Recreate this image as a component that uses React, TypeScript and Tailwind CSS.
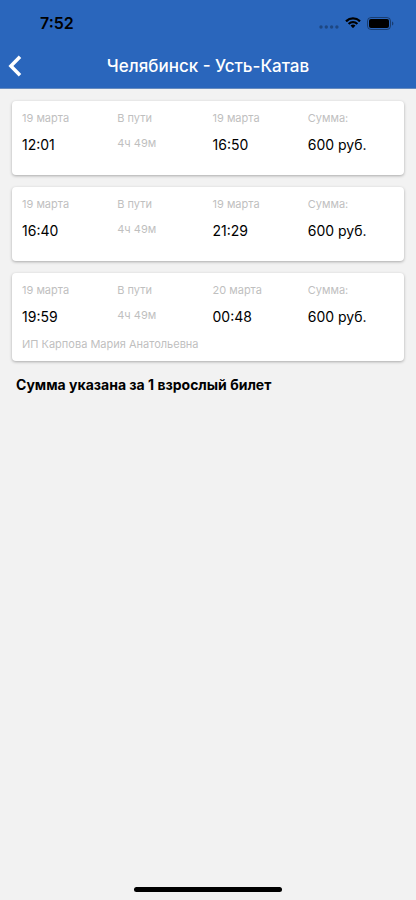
import React from 'react';

interface Trip {
  departDate: string;
  departTime: string;
  duration: string;
  arriveDate: string;
  arriveTime: string;
  price: string;
  carrier?: string;
}

const trips: Trip[] = [
  { departDate: '19 марта', departTime: '12:01', duration: '4ч 49м', arriveDate: '19 марта', arriveTime: '16:50', price: '600 руб.' },
  { departDate: '19 марта', departTime: '16:40', duration: '4ч 49м', arriveDate: '19 марта', arriveTime: '21:29', price: '600 руб.' },
  {
    departDate: '19 марта',
    departTime: '19:59',
    duration: '4ч 49м',
    arriveDate: '20 марта',
    arriveTime: '00:48',
    price: '600 руб.',
    carrier: 'ИП Карпова Мария Анатольевна',
  },
];

const StatusBar: React.FC = () => (
  <div className="flex h-11 items-center justify-between pl-10 pr-[22px] pt-0.5">
    <span className="text-base font-semibold">7:52</span>
    <div className="flex items-center gap-1.5">
      <svg width="20" height="4" viewBox="0 0 20 4" className="mt-2 fill-black/30" aria-hidden="true">
        <circle cx="2" cy="2" r="1.7" />
        <circle cx="7.3" cy="2" r="1.7" />
        <circle cx="12.6" cy="2" r="1.7" />
        <circle cx="17.9" cy="2" r="1.7" />
      </svg>
      <svg width="16" height="12" viewBox="0 0 17 12" aria-hidden="true">
        <path d="M8.500 2.400c2.400 0 4.600.9 6.300 2.500.1.1.3.1.5 0l1.200-1.200c.1-.2.1-.4 0-.5a11.500 11.500 0 0 0-16 0c-.1.1-.1.3 0 .5l1.200 1.200c.2.1.4.1.5 0A9.100 9.100 0 0 1 8.500 2.400z" />
        <path d="M8.500 6.300c1.300 0 2.600.5 3.500 1.400.2.1.4.1.5 0l1.200-1.300c.2-.1.2-.3 0-.5a7.600 7.600 0 0 0-10.400 0c-.2.2-.2.4 0 .5l1.200 1.300c.1.1.3.1.5 0 .9-.9 2.200-1.400 3.500-1.400z" />
        <path d="M10.900 9c.1-.1.1-.4 0-.5a3.700 3.700 0 0 0-4.800 0c-.1.1-.1.4 0 .5l2.200 2.200c.1.1.3.1.4 0z" />
      </svg>
      <svg width="27" height="13" viewBox="0 0 27 13" aria-hidden="true">
        <rect x=".5" y=".5" width="23" height="12" rx="3.5" fill="none" stroke="#000" strokeOpacity=".4" />
        <rect x="2" y="2" width="20" height="9" rx="2" />
        <path d="M25 4.500v4c.8-.3 1.400-1.100 1.400-2s-.6-1.700-1.400-2z" fillOpacity=".4" />
      </svg>
    </div>
  </div>
);

const TripCard: React.FC<{ trip: Trip }> = ({ trip }) => (
  <li className="min-h-[74px] rounded bg-white px-2.5 py-[9px] shadow-[0_1px_3px_rgba(0,0,0,0.3)]">
    <div className="grid grid-cols-[95fr_95fr_95fr_86fr] text-[11px] leading-4 text-[#bfbfbf]">
      <div>
        <p>{trip.departDate}</p>
        <p className="mt-[9px] text-sm leading-5 text-black">{trip.departTime}</p>
      </div>
      <div>
        <p>В пути</p>
        <p className="mt-[9px]">{trip.duration}</p>
      </div>
      <div>
        <p>{trip.arriveDate}</p>
        <p className="mt-[9px] text-sm leading-5 text-black">{trip.arriveTime}</p>
      </div>
      <div>
        <p>Сумма:</p>
        <p className="mt-[9px] text-sm leading-5 text-black">{trip.price}</p>
      </div>
    </div>
    {trip.carrier && <p className="mt-[9px] text-[11px] leading-4 text-[#bfbfbf]">{trip.carrier}</p>}
  </li>
);

export default function App() {
  return (
    <div className="flex min-h-screen flex-col bg-[#f2f2f2] font-['Inter','Liberation_Sans',sans-serif] text-black">
      <header className="border-b border-[#668bbf] bg-[#2a66bc]">
        <StatusBar />
        <div className="grid h-11 grid-cols-[32px_1fr_32px] items-center">
          <button type="button" aria-label="Назад" className="flex h-11 items-center pl-2">
            <svg width="14" height="22" viewBox="0 0 14 22" fill="none" stroke="#fff" strokeWidth="3.5" aria-hidden="true">
              <path d="M12 1.700 2.900 11l9.100 9.300" />
            </svg>
          </button>
          <h1 className="pt-0.5 text-center text-[17px] font-medium text-white">Челябинск - Усть-Катав</h1>
        </div>
      </header>
      <main className="flex-1 px-3 pt-3">
        <ul className="flex flex-col gap-3">
          {trips.map((trip) => (
            <TripCard key={trip.departTime} trip={trip} />
          ))}
        </ul>
        <p className="mt-3.5 px-1 text-sm font-bold">Сумма указана за 1 взрослый билет</p>
      </main>
      <footer className="flex justify-center pb-2">
        <div className="h-[5px] w-[148px] rounded-full bg-black" />
      </footer>
    </div>
  );
}
